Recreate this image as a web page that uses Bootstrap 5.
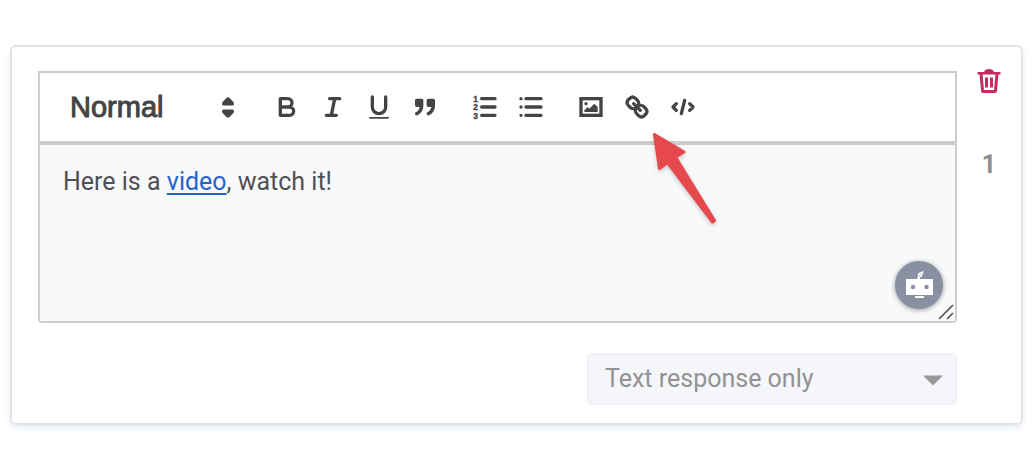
<!DOCTYPE html>
<html lang="en">
<head>
<meta charset="utf-8">
<meta name="viewport" content="width=device-width, initial-scale=1">
<title>Question editor</title>
<link href="https://cdn.jsdelivr.net/npm/bootstrap@5.3.0/dist/css/bootstrap.min.css" rel="stylesheet">
<style>
  body { font-family: Roboto, "Liberation Sans", sans-serif; background: #fff; padding: 45px 10px 24px; }
  .question { border: 2px solid #e3e3e3; border-radius: 6px; box-shadow: 0 3px 6px #e6edf8; padding: 24px 0 18px 26px; }
  .editor { border: 2px solid #ccc; border-radius: 0 0 4px 4px; }
  .toolbar { height: 72px; padding: 0 30px; border-bottom: 4px solid #ccc; }
  .toolbar .group { margin-right: 14px; }
  .toolbar button { width: 46px; height: 40px; padding: 0; border: 0; background: none; line-height: 1; }
  .toolbar button svg { width: 30px; height: 30px; }
  .heading { width: 172px; margin-right: 22px; }
  .heading select { appearance: none; border: 0; background: none; padding: 0; width: 100%; font: 29px/40px "Liberation Sans", sans-serif; color: #444; -webkit-text-stroke: 1px #444; }
  .heading svg { width: 12px; height: 21px; right: 8px; top: 10px; pointer-events: none; }
  .ln { fill: none; stroke: #444; stroke-width: 2; stroke-linecap: round; stroke-linejoin: round; }
  .fl { fill: #444; }
  .num { font: bold 5px/1 "Liberation Sans", sans-serif; fill: #444; stroke: #444; stroke-width: .2; }
  .content { height: 176px; padding: 19px 23px; background: #f8f9fb; color: #505054; font-size: 25px; line-height: 36px; outline: 0; }
  .content a { color: #2563cb; text-decoration-thickness: 2px; text-underline-offset: 3px; }
  .bot { width: 48px; height: 48px; right: 12px; bottom: 12px; border: 0; padding: 0; background: #8890a1; box-shadow: 0 1px 5px #0006; }
  .grip { right: 0; bottom: 0; }
  .side { width: 64px; }
  .side button { width: 40px; height: 24px; margin: -2px 0 54px; padding: 0; border: 0; background: none; line-height: 1; }
  .number { font: bold 25px/36px Roboto, sans-serif; color: #8d8d8d; }
  .answer { width: 370px; margin: 30px 64px 0 0; }
  .answer select { appearance: none; width: 100%; height: 52px; padding: 0 16px; border: 2px solid #f0f1f6; border-radius: 5px; background: #f5f6fa; color: #929292; font-size: 25px; opacity: 1; }
  .answer svg { right: 14px; top: 22px; pointer-events: none; }
  .pointer { left: 607px; top: 56px; pointer-events: none; filter: drop-shadow(0 2px 2px #0003); }
</style>
</head>
<body>
<main class="question">
  <div class="d-flex">
    <div class="editor flex-fill position-relative">
      <div class="toolbar d-flex align-items-center bg-white">
        <div class="heading position-relative">
          <select aria-label="Heading style"><option>Normal</option></select>
          <svg class="position-absolute" viewBox="0 0 12 21"><path class="fl" d="M0 7Q0 5.500 1 4.500L4.500 1Q6-.5 7.500 1L11 4.500Q12 5.500 12 7Q12 8.500 10.500 8.500H1.500Q0 8.500 0 7ZM0 14Q0 12.500 1.500 12.500H10.500Q12 12.500 12 14Q12 15.500 11 16.500L7.500 20Q6 21.500 4.500 20L1 16.500Q0 15.500 0 14Z"/></svg>
        </div>
        <div class="group d-flex">
          <button type="button" aria-label="Bold"><svg viewBox="0 0 18 18"><path class="ln" d="M5 4H9.500A2.500 2.500 0 0 1 12 6.500A2.500 2.500 0 0 1 9.500 9H5ZM5 9H10.500A2.500 2.500 0 0 1 13 11.500A2.500 2.500 0 0 1 10.500 14H5Z"/></svg></button>
          <button type="button" aria-label="Italic"><svg viewBox="0 0 18 18"><path class="ln" d="M7 4H13M5 14H11M8 14L10 4"/></svg></button>
          <button type="button" aria-label="Underline"><svg viewBox="0 0 18 18"><path class="ln" d="M5 3V9a4 4 0 0 0 8 0V3"/><rect class="fl" x="3" y="15" width="12" height="1" rx=".5"/></svg></button>
          <button type="button" aria-label="Quote"><svg viewBox="0 0 18 18"><g class="ln"><rect class="fl" x="4" y="5" width="3" height="3"/><rect class="fl" x="11" y="5" width="3" height="3"/><path class="fl" d="M7 8c0 4.031-3 5-3 5M14 8c0 4.031-3 5-3 5"/></g></svg></button>
        </div>
        <div class="group d-flex">
          <button type="button" aria-label="Numbered list"><svg viewBox="0 0 18 18"><path class="ln" d="M7 4H15M7 9H15M7 14H15"/><g class="num"><text x="2" y="6">1</text><text x="2" y="11">2</text><text x="2" y="16">3</text></g></svg></button>
          <button type="button" aria-label="Bullet list"><svg viewBox="0 0 18 18"><path class="ln" d="M6 4H15M6 9H15M6 14H15M3 4H3M3 9H3M3 14H3"/></svg></button>
        </div>
        <div class="group d-flex">
          <button type="button" aria-label="Image"><svg viewBox="0 0 18 18"><rect class="ln" style="stroke-linejoin:miter" x="3" y="4" width="12" height="10"/><circle class="fl" cx="6" cy="7" r="1"/><path class="fl" d="M5 12V11L7 9L8 10L11 7L13 9V12Z"/></svg></button>
          <button type="button" aria-label="Link"><svg viewBox="0 0 18 18"><path class="ln" d="M7 7L11 11M8.900 4.577a3.476 3.476 0 0 1 .36 4.679A3.476 3.476 0 0 1 4.577 8.900C3.185 7.500 2.035 6.400 4.217 4.217S7.500 3.185 8.900 4.577ZM13.423 9.100a3.476 3.476 0 0 0-4.679-.36 3.476 3.476 0 0 0 .36 4.679c1.392 1.392 2.500 2.542 4.679.36S14.815 10.500 13.423 9.100Z"/></svg></button>
          <button type="button" aria-label="Code"><svg viewBox="0 0 18 18"><path class="ln" d="M5 7L3 9L5 11M13 7L15 9L13 11M10 5L8 13"/></svg></button>
        </div>
      </div>
      <div class="content" contenteditable="true" spellcheck="false">Here is a <a href="#">video</a>, watch it!</div>
      <button type="button" class="bot rounded-circle position-absolute" aria-label="Writing assistant">
        <svg class="d-block" width="48" height="48" viewBox="0 0 48 48"><path fill="#fff" d="M11 18H22.500V16L23.500 12L28 10L28.500 11L26.500 16H25V18H38V34H11ZM20 35H29V37H20Z"/><path stroke="#8890a1" stroke-width=".5" d="M24 16L26 12"/><circle cx="18" cy="26" r="2.200" fill="#8890a1"/><circle cx="31.500" cy="26" r="2.200" fill="#8890a1"/></svg>
      </button>
      <svg class="grip position-absolute" width="18" height="18" viewBox="0 0 18 18"><path d="M2 16L16 2M10 16L16 10" stroke="#555" stroke-width="1.700"/></svg>
      <svg class="pointer position-absolute" width="75" height="100" viewBox="0 0 75 100"><path fill="#e5494d" stroke="#e5494d" stroke-width="3" stroke-linejoin="round" d="M7.500 5.500L37 23L28.500 28L67.500 91.500L65.500 93L20.500 33.500L12.500 39.500Z"/></svg>
    </div>
    <div class="side d-flex flex-column align-items-center">
      <button type="button" aria-label="Delete question"><svg width="24" height="24" viewBox="0 0 24 24"><path fill="none" stroke="#c42b60" stroke-width="3" stroke-linejoin="round" d="M4 4.500L5.500 21.500Q5.500 22.500 6.500 22.500H17.500Q18.500 22.500 18.500 21.500L20 4.500"/><path fill="#c42b60" d="M.5 3H7Q8 0 12 0T17 3H23.500V5.500H.5ZM8 8.500H11V18.500H8ZM13 8.500H16V18.500H13Z"/></svg></button>
      <span class="number">1</span>
    </div>
  </div>
  <div class="answer ms-auto position-relative">
    <select disabled aria-label="Response type"><option>Text response only</option></select>
    <svg class="position-absolute" width="20" height="11" viewBox="0 0 20 11"><path fill="#999" d="M0 .5H20L10 10.500Z"/></svg>
  </div>
</main>
<script src="https://cdn.jsdelivr.net/npm/bootstrap@5.3.0/dist/js/bootstrap.bundle.min.js"></script>
</body>
</html>
